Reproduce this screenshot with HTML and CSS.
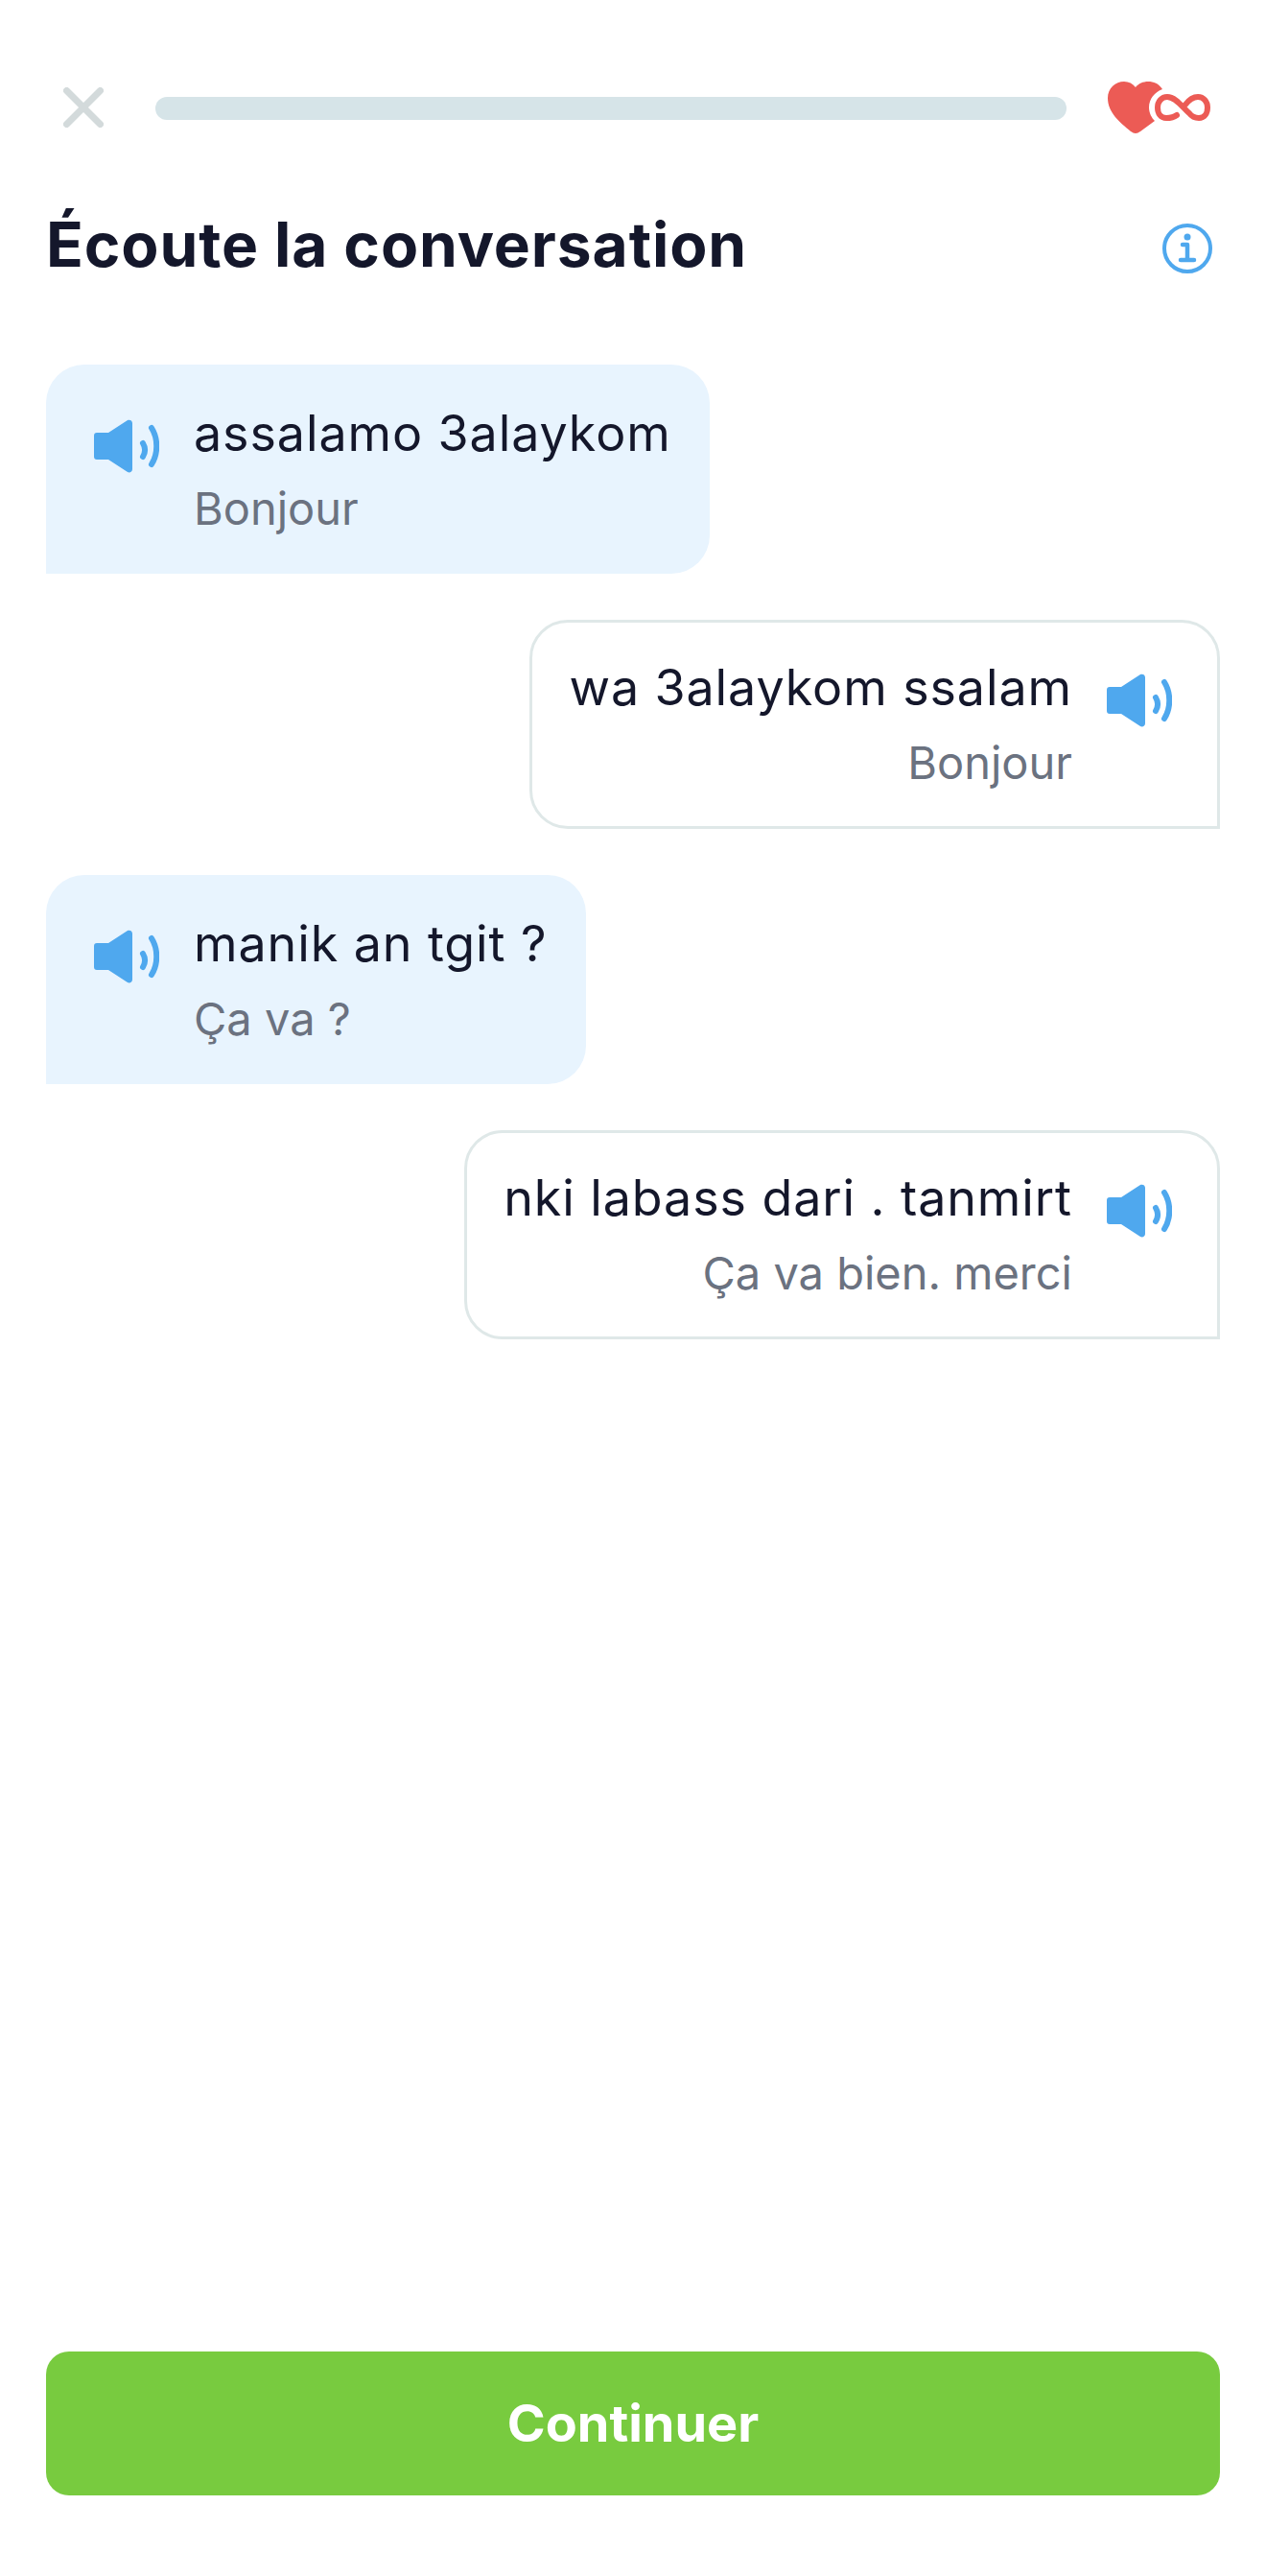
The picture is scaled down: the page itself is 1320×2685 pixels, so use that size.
FILE: index.html
```html
<!DOCTYPE html>
<html>
<head>
    <title>Écoute la conversation</title>
    <link rel="stylesheet" href="styles.css">
</head>
<body>
    <svg class="defs" width="0" height="0">
        <symbol id="speaker" viewBox="0 0 68 56">
            <path d="M3 14H15L35 1C37 0 40 1 40 4V52C40 55 37 56 35 55L15 42H3C1 42 0 41 0 39V17C0 15 1 14 3 14Z" fill="#4fa8ee"/>
            <path d="M51 25C54 30 54 34 51 39" fill="none" stroke="#4fa8ee" stroke-width="6" stroke-linecap="round"/>
            <path d="M60 9C67 20 67 36 60 47" fill="none" stroke="#4fa8ee" stroke-width="6" stroke-linecap="round"/>
        </symbol>
    </svg>

    <div class="page">
        <div class="topbar">
            <svg class="close-icon" viewBox="0 0 42 42">
                <path d="M3.5 3.5L38.5 38.5M38.5 3.5L3.5 38.5" stroke="#d3dadb" stroke-width="7" stroke-linecap="round"/>
            </svg>
            <div class="progress"></div>
            <svg class="lives" viewBox="0 0 108 54">
                <path d="M29 54C27 54 26 53 24 52C12 42 0 32 0 17C0 7 8 0 17 0C22 0 26 2 29 6C32 2 37 0 42 0C48 0 53 2 57 8C49 11 43 18 43 27C43 33 46 38 49 41L34 52C32 53 31 54 29 54Z" fill="#ec5b55"/>
                <path d="M72 35C68 38 64 38 61 38C55 38 52 33 52 27C52 21 56 16 62 16C71 16 78 27 85 33C88 37 91 38 95 38C101 38 104 33 104 27C104 21 100 16 94 16C88 16 84 20 81 24" fill="none" stroke="#ec5b55" stroke-width="6" stroke-linecap="round"/>
            </svg>
        </div>

        <div class="title-row">
            <h1>Écoute la conversation</h1>
            <svg class="info-icon" viewBox="0 0 52 52">
                <circle cx="26" cy="26" r="24" fill="none" stroke="#4fa8ee" stroke-width="4"/>
                <circle cx="26" cy="14" r="3.5" fill="#4fa8ee"/>
                <path d="M21 22H26V37M19 38H33" fill="none" stroke="#4fa8ee" stroke-width="4.5" stroke-linecap="round" stroke-linejoin="round"/>
            </svg>
        </div>

        <div class="conversation">
            <div class="bubble bubble-left">
                <svg class="speaker"><use href="#speaker"/></svg>
                <div class="bubble-text">
                    <div class="line">assalamo 3alaykom</div>
                    <div class="translation">Bonjour</div>
                </div>
            </div>
            <div class="bubble bubble-right">
                <div class="bubble-text">
                    <div class="line">wa 3alaykom ssalam</div>
                    <div class="translation">Bonjour</div>
                </div>
                <svg class="speaker"><use href="#speaker"/></svg>
            </div>
            <div class="bubble bubble-left">
                <svg class="speaker"><use href="#speaker"/></svg>
                <div class="bubble-text">
                    <div class="line">manik an tgit ?</div>
                    <div class="translation">Ça va ?</div>
                </div>
            </div>
            <div class="bubble bubble-right">
                <div class="bubble-text">
                    <div class="line">nki labass dari . tanmirt</div>
                    <div class="translation">Ça va bien. merci</div>
                </div>
                <svg class="speaker"><use href="#speaker"/></svg>
            </div>
        </div>

        <button class="continue" type="button">Continuer</button>
    </div>
</body>
</html>
```

FILE: styles.css
```css
body {
    margin: 0;
    padding: 0;
    font-family: Inter, "Liberation Sans", sans-serif;
    background-color: #fff;
    color: #14172b;
}

.defs {
    display: block;
    height: 0;
}

.page {
    height: 2685px;
    box-sizing: border-box;
    padding: 85px 48px 84px;
    display: flex;
    flex-direction: column;
}

.topbar {
    display: flex;
    align-items: center;
    height: 54px;
    padding: 0 9px 0 18px;
}

.close-icon {
    width: 42px;
    height: 42px;
    flex: none;
}

.progress {
    flex: 1;
    height: 24px;
    margin: 2px 43px 0 54px;
    background-color: #d6e4e8;
    border-radius: 12px;
}

.lives {
    width: 108px;
    height: 54px;
    flex: none;
}

.title-row {
    display: flex;
    justify-content: space-between;
    align-items: center;
    margin-top: 76px;
    padding-right: 8px;
}

.title-row h1 {
    margin: 0;
    font-size: 64px;
    line-height: 80px;
    font-weight: 700;
    letter-spacing: 0.9px;
}

.info-icon {
    width: 52px;
    height: 52px;
    margin-top: 8px;
}

.conversation {
    flex: 1;
    display: flex;
    flex-direction: column;
    align-items: flex-start;
    gap: 48px;
    margin-top: 85px;
}

.bubble {
    display: flex;
    align-items: flex-start;
    gap: 36px;
    height: 218px;
    box-sizing: border-box;
    padding-top: 36px;
}

.bubble-left {
    padding-left: 50px;
    padding-right: 40px;
    background-color: #e8f4fe;
    border-radius: 40px 40px 40px 0;
}

.bubble-right {
    align-self: flex-end;
    padding-top: 32px;
    padding-left: 38px;
    padding-right: 47px;
    border: 3px solid #dfe8e8;
    border-radius: 40px 40px 0 40px;
}

.bubble-right .bubble-text {
    text-align: right;
}

.speaker {
    width: 68px;
    height: 56px;
    flex: none;
    margin-top: 21px;
}

.line {
    font-size: 52px;
    line-height: 72px;
    letter-spacing: 0.9px;
}

.translation {
    margin-top: 6px;
    font-size: 47px;
    line-height: 72px;
    color: #6b7280;
}

.continue {
    height: 150px;
    padding: 0 0 2px;
    border: none;
    border-radius: 24px;
    background-color: #78cb3f;
    color: #fff;
    font-family: inherit;
    font-size: 54px;
    font-weight: 700;
}
```
